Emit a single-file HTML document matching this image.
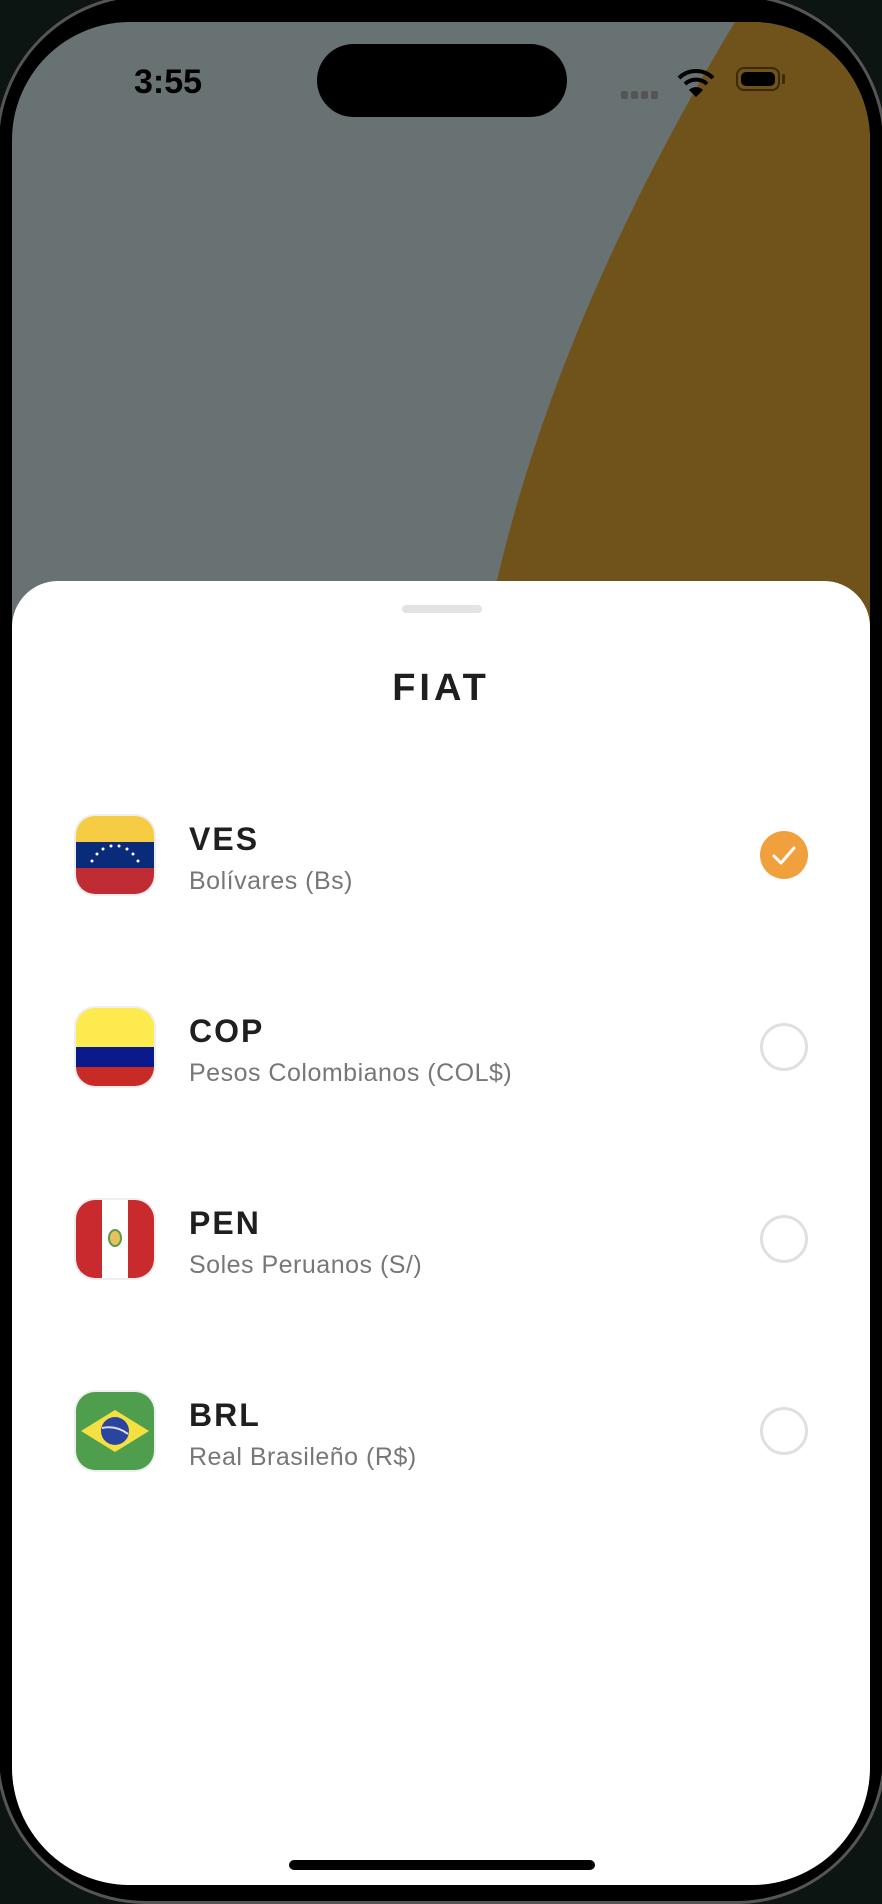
<!DOCTYPE html>
<html><head><meta charset="utf-8"><style>
html,body{margin:0;padding:0;}
body{width:882px;height:1890px;overflow:hidden;background:#0d1512;position:relative;font-family:"Liberation Sans",sans-serif;}
.bezel{position:absolute;left:-4px;top:-6px;width:890px;height:1910px;border-radius:150px;background:#000;border:3px solid #555;box-sizing:border-box;}
.screen{position:absolute;left:12px;top:22px;width:858px;height:1863px;border-radius:118px;overflow:hidden;background:#687273;}
.sheet{position:absolute;left:0;top:559px;width:858px;height:1400px;background:#fff;border-radius:46px 46px 0 0;}
.t{position:absolute;}
.flag{position:absolute;left:64px;width:78px;height:78px;border-radius:19px;overflow:hidden;box-shadow:0 0 0 2px #eee;}
.code{position:absolute;left:177px;font-size:32px;font-weight:bold;letter-spacing:2px;color:#1f1f1f;}
.sub{position:absolute;left:177px;font-size:25px;color:#777;letter-spacing:0.5px;}
.radio{position:absolute;left:748px;width:42px;height:42px;border:3px solid #e0e0e0;border-radius:50%;}
</style></head><body>
<div class="bezel"></div>
<div class="screen">
<svg width="858" height="600" style="position:absolute;left:0;top:0"><path d="M723 0 C620 170 520 380 476 600 L858 600 L858 0 Z" fill="#6f531a"/></svg>
<div class="t" style="left:122px;top:41px;font-size:34px;font-weight:bold;color:#000;">3:55</div>
<div class="t" style="left:305px;top:22px;width:250px;height:73px;border-radius:37px;background:#000;"></div>
<div class="t" style="left:609px;top:64px;"><span style="display:inline-block;width:7px;height:8px;background:#555;border-radius:2px;margin-right:3px"></span><span style="display:inline-block;width:7px;height:8px;background:#555;border-radius:2px;margin-right:3px"></span><span style="display:inline-block;width:7px;height:8px;background:#555;border-radius:2px;margin-right:3px"></span><span style="display:inline-block;width:7px;height:8px;background:#555;border-radius:2px"></span></div>
<svg class="t" style="left:664px;top:44px" width="40" height="32" viewBox="0 0 40 32"><path d="M3 12 A24 24 0 0 1 37 12" stroke="#000" stroke-width="4" fill="none"/><path d="M9 18 A16 16 0 0 1 31 18" stroke="#000" stroke-width="4" fill="none"/><path d="M20 31 L13 24 A10 10 0 0 1 27 24 Z" fill="#000"/></svg>
<div class="t" style="left:724px;top:45px;width:44px;height:24px;border:2px solid #3a2a0a;border-radius:8px;padding:3px;box-sizing:border-box;"><div style="width:100%;height:100%;background:#000;border-radius:5px"></div></div>
<div class="t" style="left:770px;top:52px;width:3px;height:10px;background:#3a2a0a;border-radius:2px"></div>
<div class="sheet">
<div class="t" style="left:390px;top:24px;width:80px;height:8px;border-radius:4px;background:#e3e3e3;"></div>
<div class="t" style="left:0;width:858px;top:86px;text-align:center;font-size:38px;letter-spacing:4px;font-weight:bold;color:#1f1f1f;">FIAT</div>

<div class="flag" style="top:235px"><div style="height:26px;background:#f6cc45"></div><div style="height:26px;background:#0a2a7a;position:relative"><svg width="78" height="26" style="position:absolute;left:0;top:0"><g fill="#fff"><circle cx="16" cy="19" r="1.5"/><circle cx="21" cy="12" r="1.5"/><circle cx="27" cy="7" r="1.5"/><circle cx="35" cy="4" r="1.5"/><circle cx="43" cy="4" r="1.5"/><circle cx="51" cy="7" r="1.5"/><circle cx="57" cy="12" r="1.5"/><circle cx="62" cy="19" r="1.5"/></g></svg></div><div style="height:26px;background:#c02c33"></div></div>
<div class="code" style="top:240px">VES</div>
<div class="sub" style="top:286px">Bolívares (Bs)</div>
<div class="t" style="left:748px;top:250px;width:48px;height:48px;border-radius:50%;background:#f0a03d;"><svg width="48" height="48"><path d="M14 25 L21 32 L34 17" stroke="#fff" stroke-width="3" fill="none" stroke-linecap="round" stroke-linejoin="round"/></svg></div>

<div class="flag" style="top:427px"><div style="height:39px;background:#fdea4f"></div><div style="height:20px;background:#0a1a8a"></div><div style="height:19px;background:#c82a26"></div></div>
<div class="code" style="top:432px">COP</div>
<div class="sub" style="top:478px">Pesos Colombianos (COL$)</div>
<div class="radio" style="top:442px"></div>

<div class="flag" style="top:619px;background:#fff"><div style="position:absolute;left:0;top:0;width:26px;height:78px;background:#c82a2e"></div><div style="position:absolute;right:0;top:0;width:26px;height:78px;background:#c82a2e"></div><div style="position:absolute;left:32px;top:29px;width:14px;height:18px;border-radius:50%;border:2px solid #5a9a4a;background:#e8c060;box-sizing:border-box"></div></div>
<div class="code" style="top:624px">PEN</div>
<div class="sub" style="top:670px">Soles Peruanos (S/)</div>
<div class="radio" style="top:634px"></div>

<div class="flag" style="top:811px;background:#4e9e4e"><svg width="78" height="78" style="position:absolute;left:0;top:0"><polygon points="5,39 39,18 73,39 39,60" fill="#f4e040"/><circle cx="39" cy="39" r="14" fill="#2a44a0"/><path d="M26 36 Q40 33 52 42" stroke="#ddd" stroke-width="2" fill="none"/></svg></div>
<div class="code" style="top:816px">BRL</div>
<div class="sub" style="top:862px">Real Brasileño (R$)</div>
<div class="radio" style="top:826px"></div>
</div>
<div class="t" style="left:277px;top:1838px;width:306px;height:10px;border-radius:5px;background:#000;"></div>
</div>
</body></html>
